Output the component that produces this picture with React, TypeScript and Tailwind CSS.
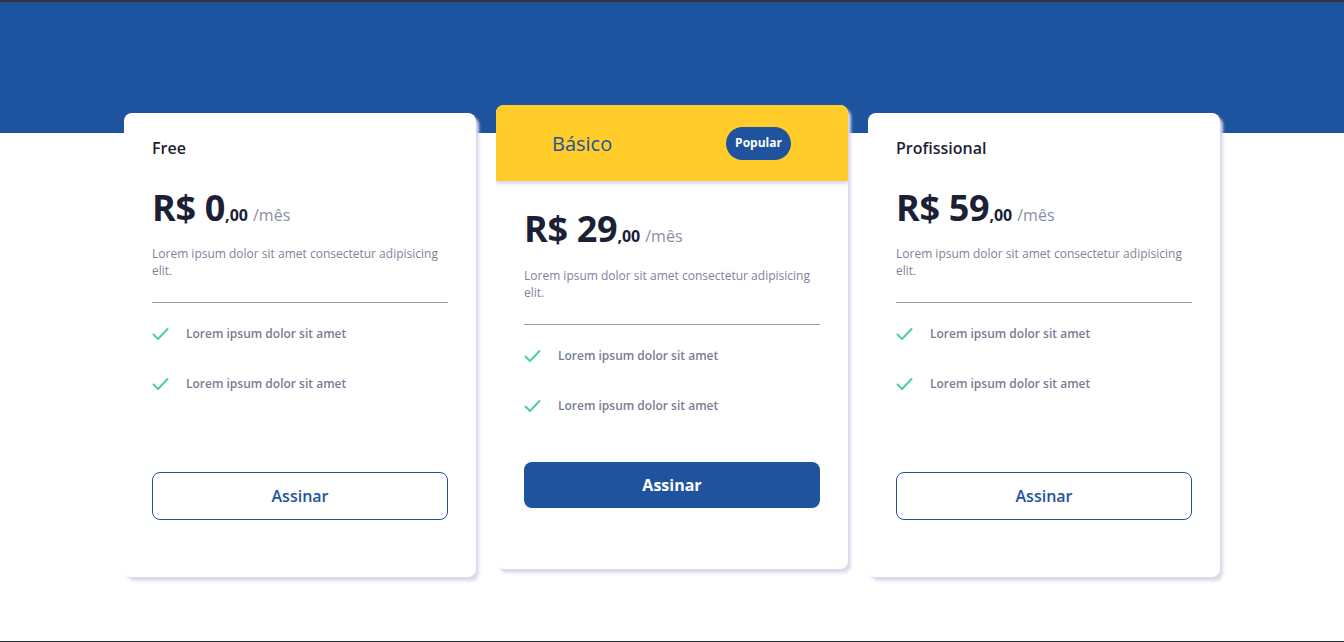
import React from "react";

const font = { fontFamily: '"Open Sans", "Noto Sans", sans-serif' };

function CheckIcon() {
  return (
    <svg width="17" height="14" viewBox="0 0 17 14" fill="none" className="shrink-0">
      <path d="M1.5 7.5 L6 12 L15.5 2" stroke="#4fcf9b" strokeWidth="2" strokeLinecap="round" strokeLinejoin="round" />
    </svg>
  );
}

function Body({ price, featured }: { price: string; featured?: boolean }) {
  return (
    <div className="flex flex-col flex-1 px-7">
      <div className="mt-[30px] flex items-baseline leading-none text-[#1c1f35]">
        <span className="text-[36px] font-bold tracking-[-0.3px]">R$ {price}</span>
        <span className="text-[16px] font-bold">,00</span>
        <span className="ml-[5px] text-[16px] text-[#8b8ea4]">/mês</span>
      </div>
      <p className={featured ? "mt-[20px] text-[12px] leading-[17px] text-[#7f8299]" : "mt-[19px] text-[12px] leading-[17px] text-[#7f8299]"}>
        Lorem ipsum dolor sit amet consectetur adipisicing elit.
      </p>
      <div className="mt-[23px] border-t border-[#9b9b9f]" />
      <ul className="mt-[22px] flex flex-col gap-[33px]">
        {[0, 1].map((i) => (
          <li key={i} className="flex items-center h-[17px]">
            <CheckIcon />
            <span className="ml-[17px] text-[12px] font-semibold text-[#7a7d92]">Lorem ipsum dolor sit amet</span>
          </li>
        ))}
      </ul>
      {featured ? (
        <button className="mt-auto mb-[61px] h-[46px] w-full rounded-lg bg-[#1f539e] text-[16px] font-bold text-white">
          Assinar
        </button>
      ) : (
        <button className="mt-auto mb-[57px] h-[48px] w-full rounded-lg border border-[#1f539e] bg-white text-[16px] font-semibold text-[#1f539e]">
          Assinar
        </button>
      )}
    </div>
  );
}

function PlainCard({ title, price }: { title: string; price: string }) {
  return (
    <div className="flex h-[464px] w-[352px] flex-col rounded-lg bg-white shadow-[3px_4px_3px_#dbd9ed]">
      <div className="px-7 pt-[23px] text-[16px] leading-[24px] font-semibold text-[#1c1f35]">{title}</div>
      <Body price={price} />
    </div>
  );
}

function FeaturedCard() {
  return (
    <div className="-mt-2 flex h-[464px] w-[352px] flex-col overflow-hidden rounded-lg bg-white shadow-[3px_4px_3px_#dbd9ed]">
      <div className="flex h-[76px] shrink-0 items-center justify-between bg-[#ffcc29] pl-[56px] pr-[57px] shadow-[0_3px_3px_#dbd9ed]">
        <span className="mt-[2px] text-[20px] font-medium text-[#1f539e]">Básico</span>
        <span className="flex h-[33px] w-[65px] items-center justify-center rounded-full bg-[#1f539e] text-[12px] font-bold text-white">
          Popular
        </span>
      </div>
      <Body price="29" featured />
    </div>
  );
}

export default function App() {
  return (
    <div style={font} className="h-[642px] w-full overflow-hidden bg-white flex flex-col">
      <div className="h-[2px] bg-[#34343c] shrink-0" />
      <div className="h-[131px] shrink-0 bg-[#1e53a0]" />
      <div className="-mt-[20px] flex items-start justify-center gap-5">
        <PlainCard title="Free" price="0" />
        <FeaturedCard />
        <PlainCard title="Profissional" price="59" />
      </div>
      <div className="mt-auto h-[1px] bg-[#1f2a2b] shrink-0" />
    </div>
  );
}
